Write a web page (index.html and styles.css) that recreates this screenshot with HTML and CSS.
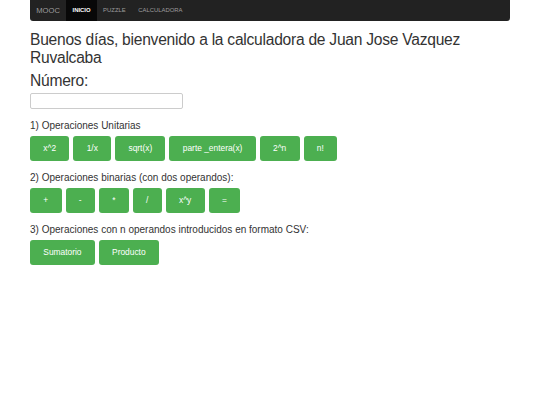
FILE: index.html
```html
<!DOCTYPE html>
<html lang="es">
<head>
    <meta charset="UTF-8">
    <meta name="viewport" content="width=device-width, initial-scale=1.0">
    <title>Calculadora - MOOC</title>
    <link rel="stylesheet" href="styles.css">
</head>
<body>
    <div class="container">
        <nav class="navbar">
            <a class="brand" href="#">MOOC</a>
            <ul class="nav-links">
                <li class="active"><a href="#">INICIO</a></li>
                <li><a href="#">PUZZLE</a></li>
                <li><a href="#">CALCULADORA</a></li>
            </ul>
        </nav>

        <h1 class="greeting">Buenos días, bienvenido a la calculadora de Juan Jose Vazquez Ruvalcaba</h1>

        <h2 class="field-title">Número:</h2>
        <input class="number-input" type="text" id="numero">

        <p class="section-title">1) Operaciones Unitarias</p>
        <div class="button-row">
            <button class="op-btn">x^2</button>
            <button class="op-btn">1/x</button>
            <button class="op-btn">sqrt(x)</button>
            <button class="op-btn">parte _entera(x)</button>
            <button class="op-btn">2^n</button>
            <button class="op-btn">n!</button>
        </div>

        <p class="section-title">2) Operaciones binarias (con dos operandos):</p>
        <div class="button-row">
            <button class="op-btn">+</button>
            <button class="op-btn">-</button>
            <button class="op-btn">*</button>
            <button class="op-btn">/</button>
            <button class="op-btn">x^y</button>
            <button class="op-btn">=</button>
        </div>

        <p class="section-title">3) Operaciones con n operandos introducidos en formato CSV:</p>
        <div class="button-row">
            <button class="op-btn">Sumatorio</button>
            <button class="op-btn">Producto</button>
        </div>
    </div>
</body>
</html>
```

FILE: styles.css
```css
body {
    margin: 0;
    font-family: "Liberation Sans", Arial, sans-serif;
    color: #333;
    background: #fff;
}
.container {
    width: 480px;
    margin: 0 auto;
}
.navbar {
    display: flex;
    height: 21px;
    background: #222;
    border-radius: 0 0 3px 3px;
}
.brand {
    padding: 0 6.3px;
    line-height: 21px;
    font-size: 7.6px;
    color: #9d9d9d;
    text-decoration: none;
}
.nav-links {
    display: flex;
    margin: 0;
    padding: 0;
    list-style: none;
}
.nav-links a {
    display: block;
    padding: 0 6.3px;
    line-height: 21px;
    font-size: 5.9px;
    color: #9d9d9d;
    text-decoration: none;
}
.nav-links .active a {
    background: #080808;
    color: #fff;
    font-weight: bold;
}
.greeting {
    margin: 10px 0 0;
    font-size: 15.6px;
    line-height: 17.5px;
    letter-spacing: -0.25px;
    font-weight: normal;
}
.field-title {
    margin: 6px 0 0;
    font-size: 15.6px;
    line-height: 17.5px;
    letter-spacing: -0.25px;
    font-weight: normal;
}
.number-input {
    display: block;
    box-sizing: border-box;
    width: 153px;
    height: 16px;
    margin-top: 3px;
    padding: 0 4px;
    border: 1px solid #ccc;
    border-radius: 2px;
}
.section-title {
    margin: 11px 0 4px;
    font-size: 10px;
    line-height: 12px;
}
.button-row {
    display: flex;
    gap: 4px;
}
.op-btn {
    height: 25px;
    padding: 0 13.3px;
    border: none;
    border-radius: 3px;
    background: #4caf50;
    color: #fff;
    font-family: "Liberation Sans", Arial, sans-serif;
    font-size: 8.4px;
}
```
